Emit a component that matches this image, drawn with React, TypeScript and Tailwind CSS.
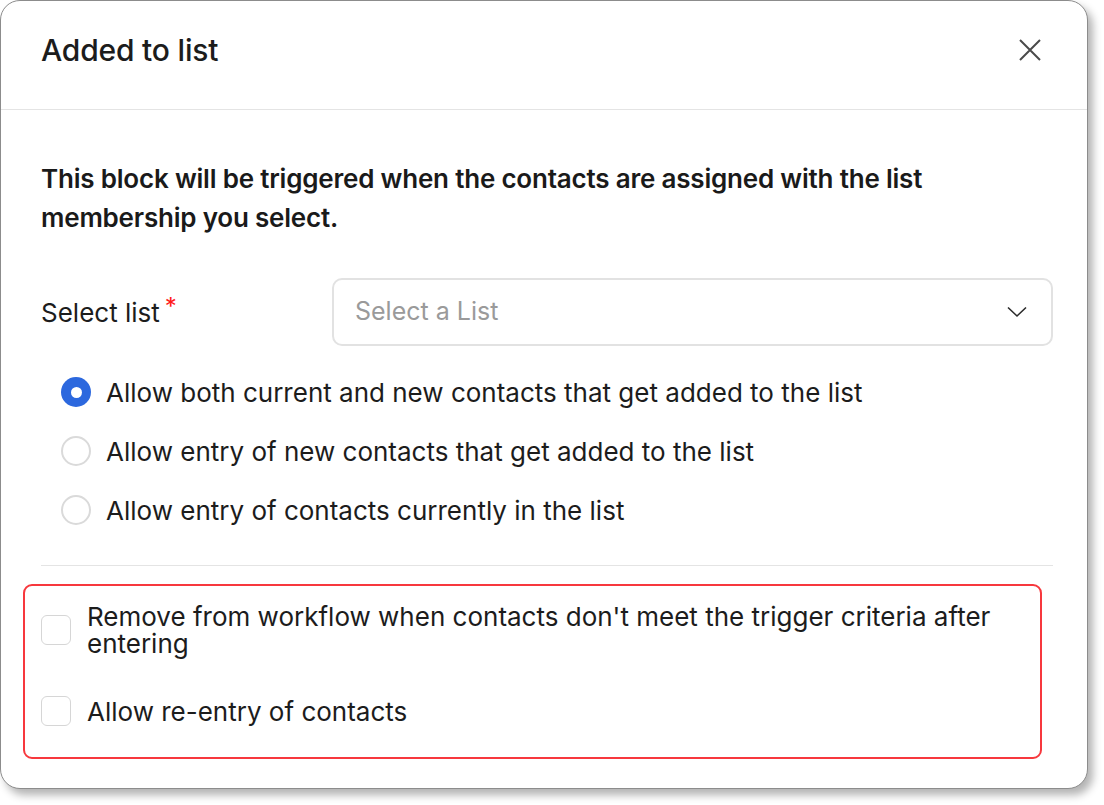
import { useState } from "react";

const options = [
  "Allow both current and new contacts that get added to the list",
  "Allow entry of new contacts that get added to the list",
  "Allow entry of contacts currently in the list",
];

function Checkbox({ label }: { label: string }) {
  return (
    <label className="flex items-center gap-[16px]">
      <span className="w-[30px] h-[30px] shrink-0 rounded-[6px] border border-[#d6d6d6] bg-white" />
      <span className="text-[26px] leading-[27px] text-[#1c1c1c]">{label}</span>
    </label>
  );
}

export default function App() {
  const [selected, setSelected] = useState(0);

  return (
    <div className="w-[1104px] h-[805px] bg-white" style={{ fontFamily: "Inter, 'Noto Sans', sans-serif" }}>
      <div className="w-[1088px] h-[789px] rounded-[20px] border border-[#8c8c8c] bg-white shadow-[5px_6px_9px_rgba(0,0,0,0.3)] flex flex-col">
        <div className="h-[109px] shrink-0 flex items-center justify-between pl-[40px] pr-[46px] pb-[10px] border-b border-[#e4e4e4]">
          <h1 className="text-[30px] font-medium text-[#1c1c1c] tracking-[-0.2px]">Added to list</h1>
          <svg width="22" height="22" viewBox="0 0 22 22" fill="none" stroke="#4a4a4a" strokeWidth="2">
            <path d="M1 1L21 21M21 1L1 21" />
          </svg>
        </div>

        <div className="flex flex-col px-[40px] pt-[49px]">
          <p className="text-[26px] leading-[39px] font-semibold text-[#1a1a1a] tracking-[-0.2px] pr-[80px]">
            This block will be triggered when the contacts are assigned with the list membership you select.
          </p>

          <div className="flex items-center mt-[41px]">
            <div className="w-[291px] text-[26px] text-[#1c1c1c] flex items-start">
              Select list<span className="text-[#ff1a1a] ml-[5px] text-[24px] leading-[20px] mt-[4px]">*</span>
            </div>
            <div className="flex-1 h-[68px] mr-[-6px] rounded-[10px] border-2 border-[#e2e2e2] flex items-center justify-between pl-[21px] pr-[24px]">
              <span className="text-[25px] text-[#9a9a9a]">Select a List</span>
              <svg width="20" height="12" viewBox="0 0 20 12" fill="none" stroke="#2a2a2a" strokeWidth="1.6">
                <path d="M1 1.5L10 10L19 1.5" />
              </svg>
            </div>
          </div>

          <div className="flex flex-col gap-[29px] mt-[31px] pl-[20px]">
            {options.map((o, i) => (
              <div key={i} className="flex items-center gap-[15px] h-[30px] cursor-pointer" onClick={() => setSelected(i)}>
                {selected === i ? (
                  <span className="w-[30px] h-[30px] rounded-full bg-[#2c68de] flex items-center justify-center">
                    <span className="w-[11px] h-[11px] rounded-full bg-white" />
                  </span>
                ) : (
                  <span className="w-[30px] h-[30px] rounded-full border-2 border-[#dadada] bg-white" />
                )}
                <span className="text-[26px] text-[#1c1c1c]">{o}</span>
              </div>
            ))}
          </div>

          <div className="h-px bg-[#e4e4e4] mt-[40px] mr-[-6px]" />
        </div>

        <div className="ml-[22px] mt-[18px] mr-[45px] rounded-[9px] border-[2.5px] border-[#f7383d] pl-[16px] pr-[16px] pt-[17px] pb-[31px] flex flex-col gap-[39px]">
          <Checkbox label="Remove from workflow when contacts don't meet the trigger criteria after entering" />
          <Checkbox label="Allow re-entry of contacts" />
        </div>
      </div>
    </div>
  );
}
